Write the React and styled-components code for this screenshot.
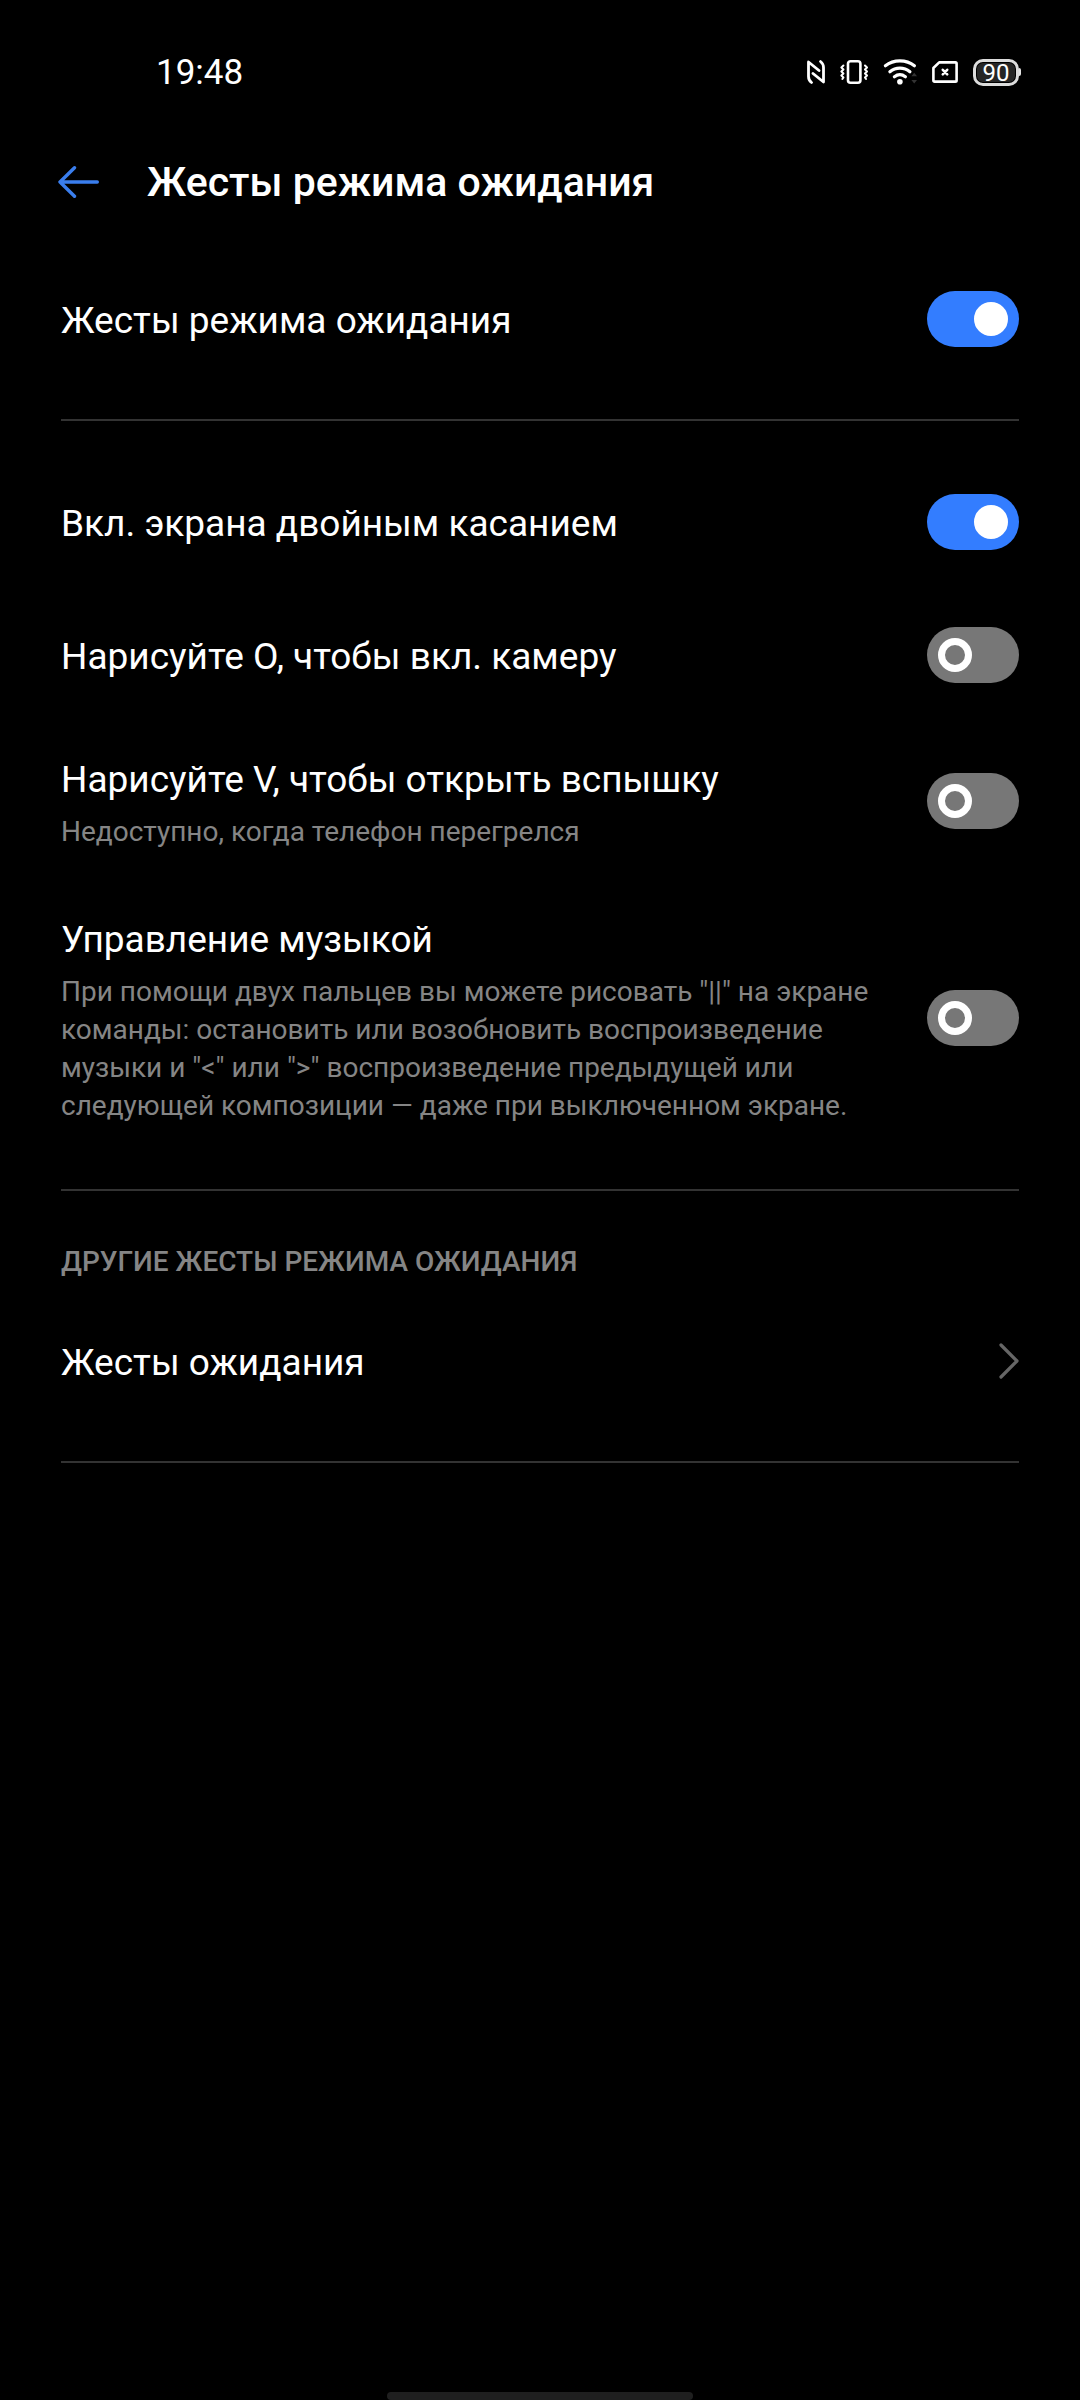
import React, { useState } from 'react'
import styled, { createGlobalStyle } from 'styled-components'

const GlobalStyle = createGlobalStyle`
    *, *::before {
        box-sizing: border-box;
    }
    body {
        margin: 0;
        background-color: #000;
        color: #fff;
        font-family: Roboto, "Noto Sans", sans-serif;
    }
`
const Screen = styled.div`
    min-height: 100vh;
    display: flex;
    flex-direction: column;
`
const StatusBar = styled.div`
    height: 112px;
    padding: 32px 59px 0 156px;
    display: flex;
    justify-content: space-between;
    align-items: center;
`
const Clock = styled.time`
    font-size: 35px;
    line-height: 41px;
`
const StatusIcons = styled.div`
    display: flex;
    align-items: center;
    gap: 15px;
`
const Icon = styled.svg`
    display: block;
    flex: none;
    fill: none;
    stroke: ${props => props.$color || '#fff'};
    stroke-width: ${props => props.$stroke || 3};
    stroke-linecap: round;
    stroke-linejoin: round;
`
const Battery = styled.div`
    display: flex;
    align-items: center;
`
const BatteryBody = styled.div`
    width: 46px;
    height: 27px;
    padding: 1px;
    border: 3px solid #dcdcdc;
    border-radius: 10px;
    display: flex;
`
const BatteryLevel = styled.span`
    flex: 1;
    border-radius: 6px;
    background-color: #262626;
    font-size: 24px;
    line-height: 20px;
    text-align: center;
`
const BatteryTip = styled.span`
    width: 2px;
    height: 8px;
    border-radius: 0 2px 2px 0;
    background-color: #e4e4e4;
`
const AppBar = styled.header`
    height: 140px;
    padding: 0 58px;
    display: flex;
    align-items: center;
    gap: 48px;
`
const BackButton = styled.button`
    border: none;
    padding: 0;
    background: none;
    cursor: pointer;
`
const Title = styled.h1`
    margin: 0;
    font-size: 41px;
    line-height: 48px;
    font-weight: 500;
`
const Content = styled.main`
    flex: 1;
    padding: 0 61px;
`
const Divider = styled.hr`
    height: 2px;
    margin: 34px 0;
    border: none;
    background-color: #333;
`
const Row = styled.div`
    display: flex;
    justify-content: space-between;
    align-items: center;
    gap: 58px;
`
const LinkRow = styled(Row).attrs({ as: 'a' })`
    color: inherit;
    text-decoration: none;
`
const RowText = styled.div`
    flex: 1;
    padding: ${props => props.$detailed ? '36px 0 30px' : '46px 0 42px'};
`
const RowTitle = styled.label`
    display: block;
    font-size: 37px;
    line-height: 45px;
`
const Description = styled.p`
    margin: 11px 0 0;
    font-size: 28px;
    line-height: 38px;
    color: #858585;
`
const Switch = styled.input`
    appearance: none;
    flex: none;
    width: 92px;
    height: 56px;
    margin: 0;
    padding: 0 11px;
    border-radius: 28px;
    display: flex;
    align-items: center;
    background-color: #777;
    cursor: pointer;

    &::before {
        content: "";
        width: 34px;
        height: 34px;
        border: 7px solid #fff;
        border-radius: 50%;
    }
    &:checked {
        justify-content: flex-end;
        background-color: #337dff;
    }
    &:checked::before {
        background-color: #fff;
    }
`
const SectionTitle = styled.h2`
    margin: 0;
    padding: 19px 0 14px;
    font-size: 28px;
    line-height: 36px;
    font-weight: 500;
    text-transform: uppercase;
    color: #858585;
`
const NavHandle = styled.div`
    width: 306px;
    height: 8px;
    margin: 0 auto;
    border-radius: 4px;
    background-color: #1f1f1f;
`

const gestures = [
    { id: 'wake', title: 'Вкл. экрана двойным касанием', on: true },
    { id: 'camera', title: 'Нарисуйте O, чтобы вкл. камеру', on: false },
    {
        id: 'flash',
        title: 'Нарисуйте V, чтобы открыть вспышку',
        description: 'Недоступно, когда телефон перегрелся',
        on: false
    },
    {
        id: 'music',
        title: 'Управление музыкой',
        description: 'При помощи двух пальцев вы можете рисовать "||" на экране команды: остановить или возобновить воспроизведение музыки и "<" или ">" воспроизведение предыдущей или следующей композиции — даже при выключенном экране.',
        on: false
    }
]

const SwitchRow = ({ id, title, description, on }) => {
    const [checked, setChecked] = useState(on)

    return (
        <Row>
            <RowText $detailed={Boolean(description)}>
                <RowTitle htmlFor={id}>{title}</RowTitle>
                {description && <Description id={`${id}-text`}>{description}</Description>}
            </RowText>
            <Switch
                id={id}
                type='checkbox'
                role='switch'
                aria-describedby={description ? `${id}-text` : undefined}
                checked={checked}
                onChange={e => setChecked(e.target.checked)}
            />
        </Row>
    )
}

const NfcIcon = () => (
    <Icon width='18' height='24' viewBox='0 0 18 24' $stroke={2.8}>
        <path d='M4.5 22.5C2.3 20.8 1.5 19.5 1.5 16.5V2l10.5 8.5' />
        <path d='M13.5 1.5c2.2 1.7 3 3 3 6V22L6 13.5' />
    </Icon>
)

const VibrateIcon = () => (
    <Icon width='28' height='24' viewBox='0 0 28 24' $stroke={2.6}>
        <rect x='8' y='1.3' width='12.4' height='21.4' rx='2.5' />
        <path d='M3.4 5.5 1.4 7.5l2 2-2 2 2 2-2 2 2 2-1 1.5M25 5.5l2 2-2 2 2 2-2 2 2 2-2 2 1 1.5' strokeWidth='2' />
    </Icon>
)

const WifiIcon = () => (
    <Icon width='34' height='26' viewBox='0 0 34 26' $stroke={3.2}>
        <path d='M2.4 6.8c8.2-6.6 20.8-6.6 29 0' />
        <path d='M6.9 12.7c5.9-4.9 14.1-4.9 20 0' />
        <path d='M11.4 17.8c3.4-2.6 7.6-2.6 11 0' />
        <circle cx='16.9' cy='22.8' r='2.8' fill='#fff' stroke='none' />
        <path d='M28.4 17.2l2.8-3.4 2.8 3.4zM28.4 21l2.8 3.4L34 21z' fill='#333' stroke='none' />
    </Icon>
)

const SimIcon = () => (
    <Icon width='26' height='22' viewBox='0 0 26 22' $stroke={2.6}>
        <path d='M7.2 1.4h16.2q1.2 0 1.2 1.2v16.8q0 1.2-1.2 1.2H2.6q-1.2 0-1.2-1.2V7z' />
        <path d='M10.8 8.8l4.4 4.6M15.2 8.8l-4.4 4.6' />
    </Icon>
)

const App = () => {
    return (
        <Screen>
            <GlobalStyle />
            <StatusBar>
                <Clock>19:48</Clock>
                <StatusIcons>
                    <NfcIcon />
                    <VibrateIcon />
                    <WifiIcon />
                    <SimIcon />
                    <Battery>
                        <BatteryBody>
                            <BatteryLevel>90</BatteryLevel>
                        </BatteryBody>
                        <BatteryTip />
                    </Battery>
                </StatusIcons>
            </StatusBar>
            <AppBar>
                <BackButton aria-label='Назад'>
                    <Icon width='41' height='32' viewBox='0 0 41 32' $color='#3a7eee' $stroke={3.4}>
                        <path d='M16.5 1.8 2 16l14.5 14.2M2 16h37.3' />
                    </Icon>
                </BackButton>
                <Title>Жесты режима ожидания</Title>
            </AppBar>
            <Content>
                <SwitchRow id='all' title='Жесты режима ожидания' on />
                <Divider />
                {gestures.map(gesture => <SwitchRow key={gesture.id} {...gesture} />)}
                <Divider />
                <SectionTitle>Другие жесты режима ожидания</SectionTitle>
                <LinkRow href='#gestures'>
                    <RowText>
                        <RowTitle as='span'>Жесты ожидания</RowTitle>
                    </RowText>
                    <Icon width='20' height='36' viewBox='0 0 20 36' $color='#666' $stroke={3.2}>
                        <path d='M2 2l16 16L2 34' />
                    </Icon>
                </LinkRow>
                <Divider />
            </Content>
            <NavHandle />
        </Screen>
    )
}

export default App
